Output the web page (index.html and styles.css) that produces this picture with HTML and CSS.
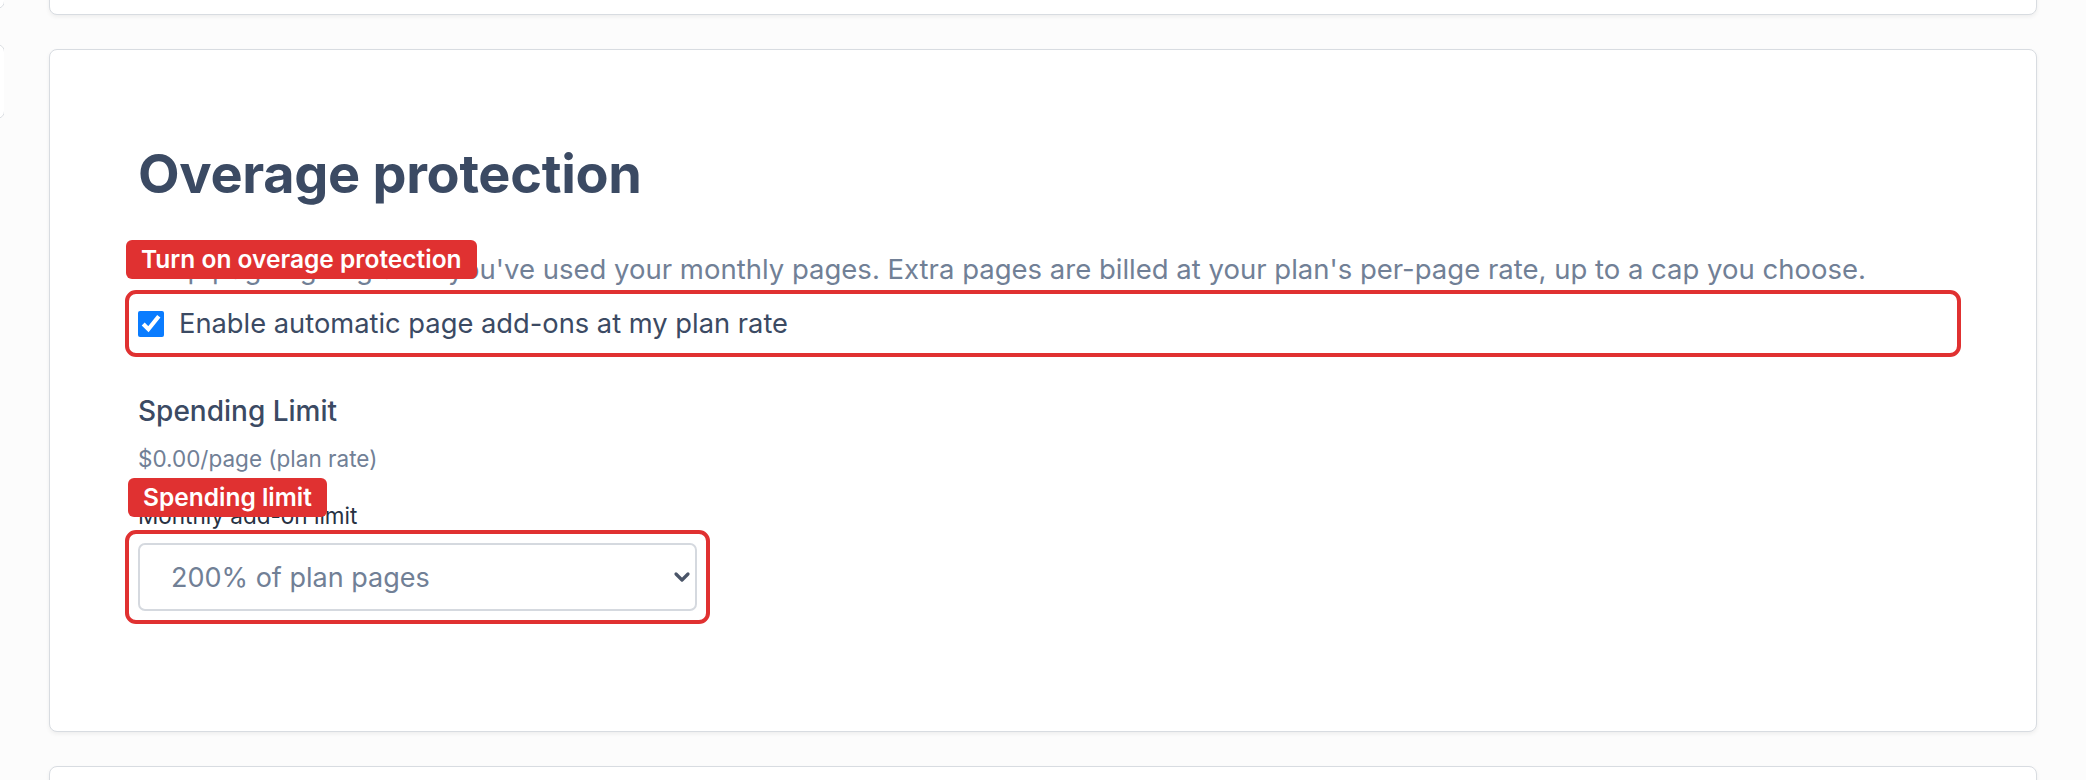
FILE: index.html
```html
<!DOCTYPE html>
<html lang="en">
<head>
  <meta charset="UTF-8" />
  <meta name="viewport" content="width=device-width, initial-scale=1.0"/>
  <title>Billing settings</title>
  <link rel="stylesheet" href="styles.css">
</head>
<body>
  <div class="side">
    <div class="side-item side-top"></div>
    <div class="side-item"></div>
  </div>

  <div class="main">
    <div class="card card-prev"></div>

    <div class="card">
      <h2 class="title">Overage protection</h2>
      <p class="desc">Keep pages going after you've used your monthly pages. Extra pages are billed at your plan's per-page rate, up to a cap you choose.</p>

      <div class="hl hl-row">
        <span class="tag tag-row">Turn on overage protection</span>
        <label class="check-row">
          <input type="checkbox" checked />
          <span>Enable automatic page add-ons at my plan rate</span>
        </label>
      </div>

      <h3 class="sub">Spending Limit</h3>
      <p class="rate">$0.00/page (plan rate)</p>
      <label class="field-label" for="limit">Monthly add-on limit</label>

      <div class="hl hl-select">
        <span class="tag tag-select">Spending limit</span>
        <div class="select-wrap">
          <select id="limit">
            <option>200% of plan pages</option>
            <option>100% of plan pages</option>
            <option>50% of plan pages</option>
          </select>
          <svg class="chevron" width="18" height="12" viewBox="0 0 18 12">
            <path d="M3 3l6 6 6-6" fill="none" stroke="#4a5568" stroke-width="3.2" stroke-linecap="round" stroke-linejoin="round"/>
          </svg>
        </div>
      </div>
    </div>

    <div class="card card-next"></div>
  </div>
</body>
</html>
```

FILE: styles.css
```css
body {
  font-family: 'Inter', 'Noto Sans', sans-serif;
  margin: 0;
  padding: 0;
  background: #fcfcfc;
  display: flex;
  height: 780px;
  overflow: hidden;
}
.side {
  width: 4px;
  overflow: hidden;
  flex-shrink: 0;
}
.side-item {
  width: 200px;
  margin-left: -197px;
  height: 73px;
  margin-top: 35px;
  border: 1px solid #dcdfe3;
  border-radius: 8px;
  background: #fff;
}
.side-top {
  margin-top: -66px;
}
.main {
  flex: 1;
  padding: 0 49px 0 45px;
}
.card {
  background: #fff;
  border: 1px solid #d8dce1;
  border-radius: 8px;
  box-shadow: 0 2px 4px rgba(0, 0, 0, 0.06);
  padding: 88px 88px 120px;
  margin-bottom: 34px;
}
.card-prev {
  height: 0;
  padding: 0;
  margin-top: -86px;
  min-height: 99px;
}
.card-next {
  height: 200px;
  padding: 0;
}
.title {
  font-size: 54px;
  line-height: 60px;
  font-weight: 700;
  color: #3b4a63;
  margin: 6px 0 48px;
  letter-spacing: -0.3px;
}
.desc {
  font-size: 27.5px;
  line-height: 34px;
  color: #718096;
  margin: 0 0 17px;
  white-space: nowrap;
}
.hl {
  position: relative;
}
.hl::before {
  content: "";
  position: absolute;
  inset: -13px;
  border: 4px solid #e03131;
  border-radius: 11px;
  pointer-events: none;
}
.tag {
  position: absolute;
  left: -12px;
  background: #e03131;
  color: #fff;
  font-size: 24.5px;
  font-weight: 600;
  line-height: 39px;
  height: 39px;
  padding: 0 15px;
  border-radius: 6px;
  white-space: nowrap;
  z-index: 2;
}
.tag-row {
  top: -63px;
}
.tag-select {
  top: -65px;
  left: -10px;
}
.check-row {
  display: flex;
  align-items: center;
  height: 41px;
  gap: 15px;
  font-size: 27.3px;
  color: #3b4a63;
}
.check-row input {
  width: 26px;
  height: 26px;
  margin: 0;
  accent-color: #0a7cff;
}
.sub {
  font-size: 28px;
  line-height: 42px;
  font-weight: 500;
  color: #3b4a63;
  margin: 46px 0 12px;
}
.rate {
  font-size: 22.5px;
  line-height: 30px;
  color: #718096;
  margin: 0 0 27px;
}
.field-label {
  display: block;
  font-size: 22.5px;
  line-height: 30px;
  color: #273142;
  margin-bottom: 12px;
}
.hl-select {
  width: 559px;
}
.select-wrap {
  position: relative;
}
select {
  appearance: none;
  -webkit-appearance: none;
  width: 100%;
  height: 68px;
  border: 2px solid #d5d9df;
  border-radius: 7px;
  background: #fff;
  padding: 0 31px;
  font-family: inherit;
  font-size: 27px;
  color: #718096;
}
.chevron {
  position: absolute;
  right: 6px;
  top: 28px;
}
```
